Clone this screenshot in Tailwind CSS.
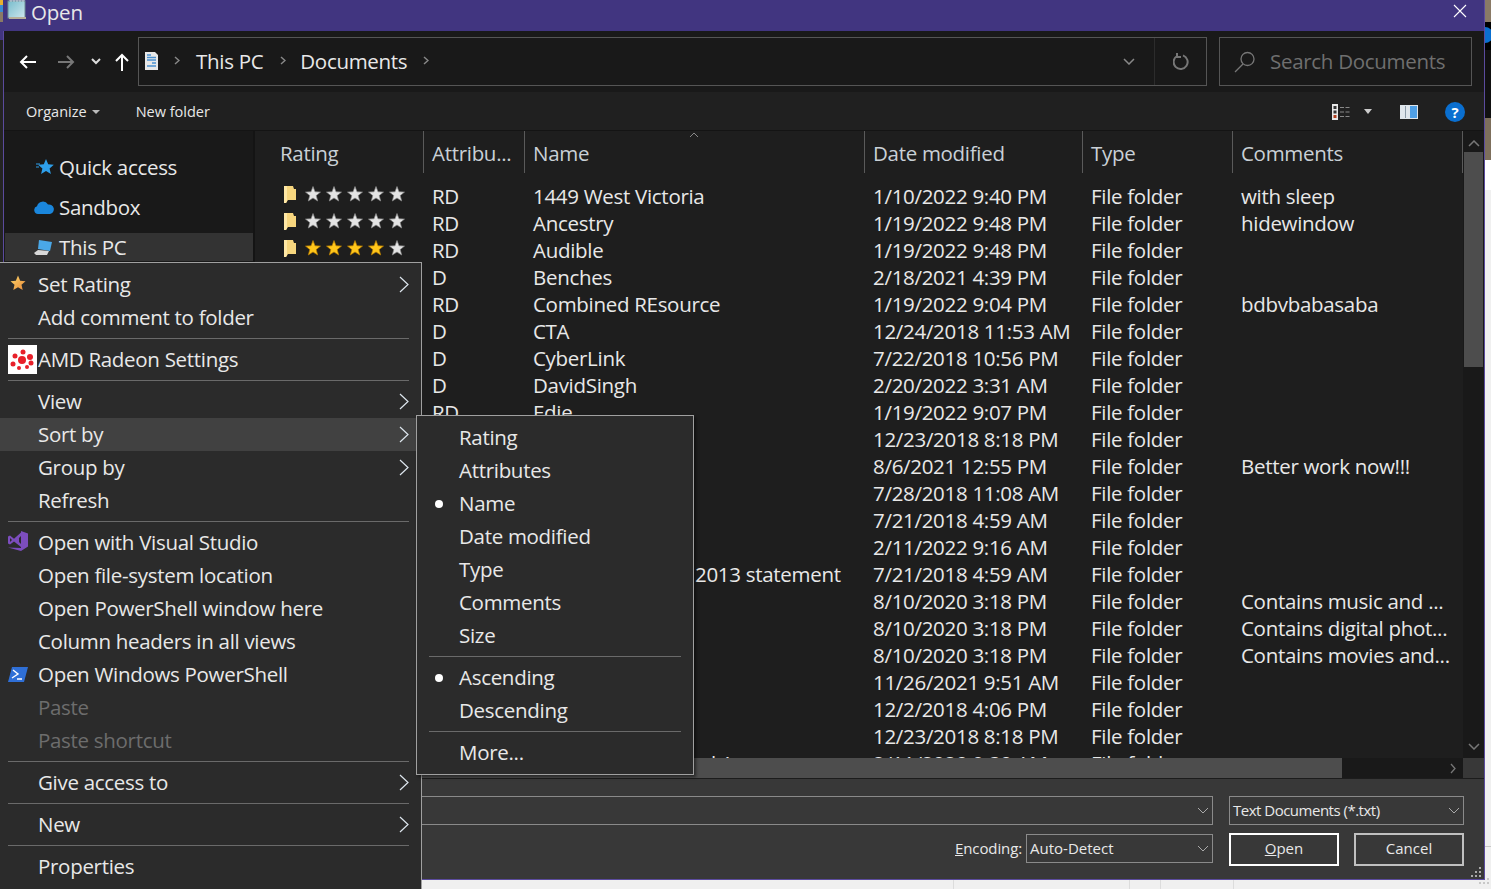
<!DOCTYPE html>
<html lang="en">
  <head>
    <meta charset="UTF-8" />
    <title>Open</title>
    <script src="https://cdn.jsdelivr.net/npm/@tailwindcss/browser@4"></script>
  </head>

  <body class="bg-[#f0f0f0] overflow-hidden">
    <div class="relative w-[1491px] h-[889px] overflow-hidden font-['Open_Sans',sans-serif] text-[#e8e8e8]">
      <div class="flex h-[880px]">
        <!-- desktop behind, left edge -->
        <div class="w-[3px] flex flex-col shrink-0">
          <div class="h-[5px] bg-[#e8b030]"></div>
          <div class="h-[7px] bg-[#3a8ad0]"></div>
          <div class="h-[10px] bg-[#8a7a66]"></div>
          <div class="h-[18px] bg-[#41357f]"></div>
          <div class="flex-1 bg-[#242424]"></div>
        </div>

        <!-- dialog -->
        <div class="w-[1482px] flex flex-col border-b border-r border-[#5b4b9e]">
          <div class="h-[31px] bg-[#413580] flex items-center justify-between shrink-0">
            <div class="flex items-center">
              <svg class="ml-[4px] -mt-[12px]" width="22" height="22" viewBox="0 0 22 22">
                <defs><linearGradient id="pad" x1="0" y1="0" x2="1" y2="1"><stop offset="0" stop-color="#78bccc" /><stop offset="1" stop-color="#cfe8ee" /></linearGradient></defs>
                <rect x="1" y="2" width="17" height="17" fill="url(#pad)" stroke="#6d8a94" />
                <path d="M2 1h16M4 0v3M7 0v3M10 0v3M13 0v3M16 0v3" stroke="#c8d4da" />
                <rect x="2" y="18" width="17" height="2" fill="#b8b09a" />
              </svg>
              <span class="ml-[2px] -mt-[6px] text-[20.5px] tracking-[-0.2px] leading-none">Open</span>
            </div>
            <svg class="mr-[17px] -mt-[9px]" width="14" height="14" viewBox="0 0 14 14" stroke="#fff" stroke-width="1.1">
              <path d="M1 1l12 12M13 1L1 13" />
            </svg>
          </div>

          <!-- nav -->
          <div class="h-[61px] bg-[#191919] flex items-center shrink-0">
            <div class="w-[135px] flex items-center shrink-0">
              <svg class="ml-[16px]" width="18" height="14" viewBox="0 0 18 14" fill="none" stroke="#fff" stroke-width="2"><path d="M17 7H2M8 1L2 7l6 6" /></svg>
              <svg class="ml-[20px]" width="18" height="14" viewBox="0 0 18 14" fill="none" stroke="#777" stroke-width="2"><path d="M1 7h15M10 1l6 6-6 6" /></svg>
              <svg class="ml-[16px]" width="10" height="7" viewBox="0 0 10 7" fill="none" stroke="#ddd" stroke-width="2"><path d="M1 1l4 4 4-4" /></svg>
              <svg class="ml-[14px]" width="14" height="18" viewBox="0 0 14 18" fill="none" stroke="#fff" stroke-width="2"><path d="M7 18V2M1 8l6-6 6 6" /></svg>
            </div>
            <div class="w-[1069px] h-[49px] border border-[#555] flex items-center text-[20.5px] tracking-[-0.3px] shrink-0">
              <svg class="ml-[5px] -mt-[1px]" width="15" height="18" viewBox="0 0 15 18">
                <path d="M1 0h10l3 3v15H1z" fill="#e8e8e8" />
                <path d="M3 3h4M3 5.500h9M3 8h9M8 11h4M3 14h9" stroke="#4a90d0" stroke-width="1.3" />
              </svg>
              <svg class="ml-[15px] -mt-[3px]" width="6" height="9" viewBox="0 0 6 9" fill="none" stroke="#888" stroke-width="1.5"><path d="M1 1l4 3.500L1 8" /></svg>
              <span class="ml-[16px]">This PC</span>
              <svg class="ml-[17px] -mt-[3px]" width="6" height="9" viewBox="0 0 6 9" fill="none" stroke="#888" stroke-width="1.5"><path d="M1 1l4 3.500L1 8" /></svg>
              <span class="ml-[14px]">Documents</span>
              <svg class="ml-[16px] -mt-[3px]" width="6" height="9" viewBox="0 0 6 9" fill="none" stroke="#888" stroke-width="1.5"><path d="M1 1l4 3.500L1 8" /></svg>
              <div class="ml-auto flex items-center h-full">
                <svg class="mr-[19px]" width="12" height="7" viewBox="0 0 12 7" fill="none" stroke="#888" stroke-width="1.5"><path d="M1 1l5 5 5-5" /></svg>
                <div class="w-[52px] h-full border-l border-[#2c2c2c] flex items-center justify-center">
                  <svg width="16" height="17" viewBox="0 0 16 17" fill="none" stroke="#777" stroke-width="2"><path d="M4 3a7 7 0 1 0 6-.6M4 0v4h4" /></svg>
                </div>
              </div>
            </div>
            <div class="ml-[12px] w-[253px] h-[49px] border border-[#555] flex items-center text-[20.5px] tracking-[-0.3px] text-[#6f6f6f] shrink-0">
              <svg class="ml-[14px]" width="22" height="22" viewBox="0 0 22 22" fill="none" stroke="#777" stroke-width="1.3"><circle cx="13.5" cy="8" r="6.5" /><path d="M9 13l-8 8" /></svg>
              <span class="ml-[14px]">Search Documents</span>
            </div>
          </div>

          <!-- toolbar -->
          <div class="h-[38px] bg-[#202020] flex items-center text-[14.5px] pt-[1px] shrink-0">
            <span class="ml-[23px]">Organize</span>
            <span class="ml-[5px] w-0 h-0 border-x-[4px] border-x-transparent border-t-[4px] border-t-[#bbb]"></span>
            <span class="ml-[36px]">New folder</span>
            <div class="ml-auto flex items-center">
              <svg width="19" height="18" viewBox="0 0 19 18">
                <rect x="0" y="1" width="6" height="16" fill="#e8e8e8" />
                <rect x="1.500" y="3" width="3" height="3" fill="#333" />
                <rect x="1.500" y="7.500" width="3" height="3" fill="#333" />
                <rect x="1.500" y="12" width="3" height="3" fill="#b04020" />
                <path d="M8 4.500h11M8 9h11M8 13.500h11" stroke="#888" stroke-dasharray="4 1.500" />
              </svg>
              <span class="ml-[13px] w-0 h-0 border-x-[4px] border-x-transparent border-t-[5px] border-t-[#ccc]"></span>
              <svg class="ml-[28px]" width="18" height="14" viewBox="0 0 18 14">
                <rect width="18" height="14" fill="#dfe6ec" />
                <rect x="10" y="1" width="7" height="12" fill="#4fa0e6" />
                <rect x="5" y="1" width="1" height="12" fill="#8a9aa8" />
              </svg>
              <span class="ml-[27px] mr-[19px] w-[20px] h-[20px] rounded-full bg-[#0a6fd0] text-white font-bold text-[15px] leading-[20px] text-center">?</span>
            </div>
          </div>

          <!-- body -->
          <div class="h-[629px] flex bg-[#1e1e1e] border-t border-[#141414] shrink-0 overflow-hidden">
            <div class="w-[250px] pt-[22px] pl-[2px] shrink-0 text-[20.5px] tracking-[-0.3px] bg-[#191919]">
              <div class="h-[28px] flex items-center">
                <svg class="ml-[31px]" width="18" height="16" viewBox="0 0 18 16"><path d="M10 0l2.200 5.200 5.600.5-4.200 3.700 1.300 5.500L10 12l-4.900 2.900 1.300-5.500L2.200 5.700l5.600-.5z" fill="#2e9fea" /><path d="M0 5h4M0 8h3" stroke="#2e9fea" /></svg>
                <span class="ml-[5px]">Quick access</span>
              </div>
              <div class="h-[28px] mt-[12px] flex items-center">
                <svg class="ml-[29px]" width="20" height="14" viewBox="0 0 20 14"><path d="M4 14a4 4 0 0 1-1-7.800A6 6 0 0 1 14 4.500 4.500 4.500 0 0 1 16 14z" fill="#1a86dc" /></svg>
                <span class="ml-[5px]">Sandbox</span>
              </div>
              <div class="h-[28px] mt-[12px] flex items-center bg-[#333333]">
                <svg class="ml-[29px]" width="19" height="17" viewBox="0 0 19 17"><path d="M5 1l13 2-2 9-12-2z" fill="#4aa8e8" /><path d="M0 14l4-3 11 1-2 4H2z" fill="#d8d8d8" /></svg>
                <span class="ml-[6px]">This PC</span>
              </div>
            </div>
            <div class="w-[2px] bg-[#141414] shrink-0"></div>

            <!-- file list -->
            <div class="w-[1208px] overflow-hidden text-[20.5px] tracking-[-0.3px] shrink-0 flex flex-col">
              <div class="relative h-[52px] shrink-0 grid grid-cols-[169px_101px_340px_218px_150px_230px] text-[#c9d0d6]">
                <div class="pl-[25px] pt-[7px] border-r border-[#5a5a5a] h-[42px]">Rating</div>
                <div class="pl-[8px] pt-[7px] border-r border-[#5a5a5a] h-[42px]">Attribu...</div>
                <div class="pl-[8px] pt-[7px] border-r border-[#5a5a5a] h-[42px]">Name</div>
                <div class="pl-[8px] pt-[7px] border-r border-[#5a5a5a] h-[42px]">Date modified</div>
                <div class="pl-[8px] pt-[7px] border-r border-[#5a5a5a] h-[42px]">Type</div>
                <div class="pl-[8px] pt-[7px] border-r border-[#5a5a5a] h-[42px]">Comments</div>
                <svg class="absolute left-[434px] top-[1px]" width="10" height="6" viewBox="0 0 10 6" fill="none" stroke="#888"><path d="M1 5l4-4 4 4" /></svg>
              </div>
              <div id="rows" class="h-[576px] overflow-hidden"></div>
            </div>

            <!-- vertical scrollbar -->
            <div class="w-[21px] bg-[#191919] shrink-0 h-[628px] flex flex-col items-center">
              <svg class="mt-[9px]" width="12" height="7" viewBox="0 0 12 7" fill="none" stroke="#777" stroke-width="1.5"><path d="M1 6l5-5 5 5" /></svg>
              <div class="mt-[5px] w-[19px] h-[215px] bg-[#4d4d4d]"></div>
              <svg class="mt-[376px]" width="12" height="7" viewBox="0 0 12 7" fill="none" stroke="#777" stroke-width="1.5"><path d="M1 1l5 5 5-5" /></svg>
            </div>
          </div>

          <!-- horizontal scrollbar -->
          <div class="h-[21px] flex shrink-0 -mt-[1px] border-b border-[#1c1c1c]">
            <div class="w-[1339px] bg-[#4d4d4d]"></div>
            <div class="w-[121px] bg-[#191919] flex items-center justify-end pr-[7px]">
              <svg width="6" height="11" viewBox="0 0 6 11" fill="none" stroke="#777" stroke-width="1.3"><path d="M1 1l4 4.500L1 10" /></svg>
            </div>
            <div class="flex-1 bg-[#383838]"></div>
          </div>

          <!-- bottom -->
          <div class="relative flex-1 bg-[#383838] text-[15px]">
            <div class="absolute left-[400px] top-[17px] w-[810px] h-[29px] border border-[#8a8a8a] flex items-center justify-end pr-[4px]">
              <svg width="10" height="6" viewBox="0 0 10 6" fill="none" stroke="#aaa"><path d="M0 0l5 5 5-5" /></svg>
            </div>
            <div class="absolute left-[1226px] top-[17px] w-[235px] h-[29px] border border-[#8a8a8a] flex items-center justify-between px-[3px] pr-[4px]">
              <span class="tracking-[-0.5px]">Text Documents (*.txt)</span>
              <svg width="10" height="6" viewBox="0 0 10 6" fill="none" stroke="#aaa"><path d="M0 0l5 5 5-5" /></svg>
            </div>
            <span class="absolute left-[952px] top-[58px] tracking-[-0.1px]"><u>E</u>ncoding:</span>
            <div class="absolute left-[1023px] top-[55px] w-[187px] h-[29px] border border-[#8a8a8a] flex items-center justify-between px-[3px] pr-[4px]">
              <span>Auto-Detect</span>
              <svg width="10" height="6" viewBox="0 0 10 6" fill="none" stroke="#aaa"><path d="M0 0l5 5 5-5" /></svg>
            </div>
            <div class="absolute left-[1226px] top-[54px] w-[110px] h-[33px] border-2 border-white flex items-center justify-center pb-[2px]"><span><u>O</u>pen</span></div>
            <div class="absolute left-[1351px] top-[54px] w-[110px] h-[33px] border-2 border-[#c0c0c0] flex items-center justify-center pb-[2px]">Cancel</div>
            <svg class="absolute right-[2px] bottom-[1px]" width="11" height="11" viewBox="0 0 11 11" fill="#a8a8a8">
              <rect x="8" y="0" width="2" height="2" /><rect x="4" y="4" width="2" height="2" /><rect x="8" y="4" width="2" height="2" /><rect x="0" y="8" width="2" height="2" /><rect x="4" y="8" width="2" height="2" /><rect x="8" y="8" width="2" height="2" />
            </svg>
          </div>
        </div>

        <!-- desktop behind, right edge -->
        <div class="w-[6px] flex flex-col shrink-0">
          <div class="h-[22px] bg-[#8a7a66]"></div>
          <div class="h-[28px] bg-black relative overflow-hidden"><div class="absolute -left-[8px] top-[5px] w-[16px] h-[16px] rounded-full bg-[#0a6fd0]"></div></div>
          <div class="h-[68px] bg-[#111111]"></div>
          <div class="h-[42px] bg-[#7d6f5c]"></div>
          <div class="h-[30px] bg-white"></div>
          <div class="h-[656px] bg-[#f0f0f0]"></div>
          <div class="h-px bg-[#c8c8c8]"></div>
          <div class="flex-1 bg-[#f0f0f0]"></div>
        </div>
      </div>
      <div class="h-[9px] bg-[#f0f0f0] flex">
        <div class="ml-[953px] w-px h-full bg-[#dcdcdc]"></div>
        <div class="ml-[175px] w-px h-full bg-[#dcdcdc]"></div>
        <div class="ml-[30px] w-px h-full bg-[#dcdcdc]"></div>
        <div class="ml-[72px] w-px h-full bg-[#dcdcdc]"></div>
      </div>

      <!-- dialog's left border and the resize grip's shadow, over the edges -->
      <div class="absolute left-[3px] top-[31px] w-px h-[849px] bg-[#5b4b9e]"></div>
      <svg class="absolute left-[1479px] top-[878px]" width="12" height="11" viewBox="0 0 12 11" fill="#c8c8c8">
        <rect x="8" y="0" width="2" height="2" /><rect x="8" y="4" width="2" height="2" /><rect x="0" y="4" width="2" height="2" /><rect x="4" y="4" width="2" height="2" />
      </svg>

      <!-- context menu -->
      <div class="absolute left-0 top-[262px] w-[422px] h-[627px] bg-[#2b2b2b] border-t border-r border-[#a0a0a0] pt-[5px] text-[20.5px] tracking-[-0.3px]">
        <div class="h-[33px] flex items-center relative pl-[38px]">
          <svg class="absolute left-[10px] top-[7px]" width="16" height="17" viewBox="0 0 17 17">
            <defs><linearGradient id="rate" x1="0" y1="0" x2="1" y2="1"><stop offset="0" stop-color="#fbd66a" /><stop offset="1" stop-color="#e88a3a" /></linearGradient></defs>
            <path d="M8.500 0l2.300 5.500 5.700.5-4.300 3.800 1.300 5.700-5-3-5 3 1.300-5.700L.5 6l5.700-.5z" fill="url(#rate)" />
          </svg>
          <span>Set Rating</span>
          <svg class="absolute right-[12px] top-[8px]" width="10" height="17" viewBox="0 0 10 17" fill="none" stroke="#dde6ee" stroke-width="1.2"><path d="M1 1l8 7.500L1 16" /></svg>
        </div>
        <div class="h-[33px] flex items-center pl-[38px]">Add comment to folder</div>
        <div class="h-px bg-[#6a6a6a] ml-[8px] mr-[12px] my-[4px]"></div>
        <div class="h-[33px] flex items-center relative pl-[38px]">
          <svg class="absolute left-[8px] top-[2px]" width="29" height="29" viewBox="0 0 29 29">
            <rect width="29" height="29" fill="#fff" />
            <g fill="#e8202a"><circle cx="14" cy="15" r="4" /><circle cx="7" cy="11" r="2.500" /><circle cx="22" cy="12" r="3" /><circle cx="5" cy="19" r="2.500" /><circle cx="23" cy="18" r="2.500" /><circle cx="15" cy="7" r="2.500" /><circle cx="11" cy="23" r="2" /><circle cx="19" cy="22" r="2" /></g>
          </svg>
          <span>AMD Radeon Settings</span>
        </div>
        <div class="h-px bg-[#6a6a6a] ml-[8px] mr-[12px] my-[4px]"></div>
        <div class="h-[33px] flex items-center relative pl-[38px]">
          <span>View</span>
          <svg class="absolute right-[12px] top-[8px]" width="10" height="17" viewBox="0 0 10 17" fill="none" stroke="#dde6ee" stroke-width="1.2"><path d="M1 1l8 7.500L1 16" /></svg>
        </div>
        <div class="h-[33px] flex items-center relative pl-[38px] bg-[#414141]">
          <span>Sort by</span>
          <svg class="absolute right-[12px] top-[8px]" width="10" height="17" viewBox="0 0 10 17" fill="none" stroke="#dde6ee" stroke-width="1.2"><path d="M1 1l8 7.500L1 16" /></svg>
        </div>
        <div class="h-[33px] flex items-center relative pl-[38px]">
          <span>Group by</span>
          <svg class="absolute right-[12px] top-[8px]" width="10" height="17" viewBox="0 0 10 17" fill="none" stroke="#dde6ee" stroke-width="1.2"><path d="M1 1l8 7.500L1 16" /></svg>
        </div>
        <div class="h-[33px] flex items-center pl-[38px]">Refresh</div>
        <div class="h-px bg-[#6a6a6a] ml-[8px] mr-[12px] my-[4px]"></div>
        <div class="h-[33px] flex items-center relative pl-[38px]">
          <svg class="absolute left-[8px] top-[5px]" width="20" height="20" viewBox="0 0 20 20"><path d="M13 0l7 2.500v13L13 20 0 16.500l13 .5z" fill="#7c4dbd" /><path d="M0 5.500L2 4.500l4 3.200L13 1.500v3.500L9 9l4 4v3L6 10.500 2 13.500l-2-1zM2 7v4l2-2zM9 9l2 2V7z" fill="#7c4dbd" fill-rule="evenodd" /></svg>
          <span>Open with Visual Studio</span>
        </div>
        <div class="h-[33px] flex items-center pl-[38px]">Open file-system location</div>
        <div class="h-[33px] flex items-center pl-[38px]">Open PowerShell window here</div>
        <div class="h-[33px] flex items-center pl-[38px]">Column headers in all views</div>
        <div class="h-[33px] flex items-center relative pl-[38px]">
          <svg class="absolute left-[8px] top-[9px]" width="20" height="15" viewBox="0 0 20 15"><path d="M4 0h16l-4 15H0z" fill="#2f6fd6" /><path d="M5 3l5 4-6 4M9 12h5" fill="none" stroke="#fff" stroke-width="1.4" /></svg>
          <span>Open Windows PowerShell</span>
        </div>
        <div class="h-[33px] flex items-center pl-[38px] text-[#6d6d6d]">Paste</div>
        <div class="h-[33px] flex items-center pl-[38px] text-[#6d6d6d]">Paste shortcut</div>
        <div class="h-px bg-[#6a6a6a] ml-[8px] mr-[12px] my-[4px]"></div>
        <div class="h-[33px] flex items-center relative pl-[38px]">
          <span>Give access to</span>
          <svg class="absolute right-[12px] top-[8px]" width="10" height="17" viewBox="0 0 10 17" fill="none" stroke="#dde6ee" stroke-width="1.2"><path d="M1 1l8 7.500L1 16" /></svg>
        </div>
        <div class="h-px bg-[#6a6a6a] ml-[8px] mr-[12px] my-[4px]"></div>
        <div class="h-[33px] flex items-center relative pl-[38px]">
          <span>New</span>
          <svg class="absolute right-[12px] top-[8px]" width="10" height="17" viewBox="0 0 10 17" fill="none" stroke="#dde6ee" stroke-width="1.2"><path d="M1 1l8 7.500L1 16" /></svg>
        </div>
        <div class="h-px bg-[#6a6a6a] ml-[8px] mr-[12px] my-[4px]"></div>
        <div class="h-[33px] flex items-center pl-[38px]">Properties</div>
      </div>

      <!-- sort by submenu -->
      <div class="absolute left-[416px] top-[415px] w-[278px] h-[360px] bg-[#2b2b2b] border border-[#a0a0a0] pt-[5px] text-[20.5px] tracking-[-0.3px] shadow-[2px_2px_3px_rgba(0,0,0,0.5)]">
        <div class="h-[33px] flex items-center pl-[42px]">Rating</div>
        <div class="h-[33px] flex items-center pl-[42px]">Attributes</div>
        <div class="h-[33px] flex items-center pl-[18px]"><span class="w-[8px] h-[8px] rounded-full bg-white mr-[16px]"></span>Name</div>
        <div class="h-[33px] flex items-center pl-[42px]">Date modified</div>
        <div class="h-[33px] flex items-center pl-[42px]">Type</div>
        <div class="h-[33px] flex items-center pl-[42px]">Comments</div>
        <div class="h-[33px] flex items-center pl-[42px]">Size</div>
        <div class="h-px bg-[#6a6a6a] mx-[12px] my-[4px]"></div>
        <div class="h-[33px] flex items-center pl-[18px]"><span class="w-[8px] h-[8px] rounded-full bg-white mr-[16px]"></span>Ascending</div>
        <div class="h-[33px] flex items-center pl-[42px]">Descending</div>
        <div class="h-px bg-[#6a6a6a] mx-[12px] my-[4px]"></div>
        <div class="h-[33px] flex items-center pl-[42px]">More...</div>
      </div>
    </div>

    <script>
      const files = [
        ["RD", "1449 West Victoria", "1/10/2022 9:40 PM", "with sleep", 0],
        ["RD", "Ancestry", "1/19/2022 9:48 PM", "hidewindow", 0],
        ["RD", "Audible", "1/19/2022 9:48 PM", "", 4],
        ["D", "Benches", "2/18/2021 4:39 PM", ""],
        ["RD", "Combined REsource", "1/19/2022 9:04 PM", "bdbvbabasaba"],
        ["D", "CTA", "12/24/2018 11:53 AM", ""],
        ["D", "CyberLink", "7/22/2018 10:56 PM", ""],
        ["D", "DavidSingh", "2/20/2022 3:31 AM", ""],
        ["RD", "Edie", "1/19/2022 9:07 PM", ""],
        ["", "", "12/23/2018 8:18 PM", ""],
        ["", "", "8/6/2021 12:55 PM", "Better work now!!!"],
        ["", "", "7/28/2018 11:08 AM", ""],
        ["", "", "7/21/2018 4:59 AM", ""],
        ["", "", "2/11/2022 9:16 AM", ""],
        ["", "2013 statement", "7/21/2018 4:59 AM", "", null, "pl-[170px]"],
        ["", "", "8/10/2020 3:18 PM", "Contains music and ..."],
        ["", "", "8/10/2020 3:18 PM", "Contains digital phot..."],
        ["", "", "8/10/2020 3:18 PM", "Contains movies and..."],
        ["", "", "11/26/2021 9:51 AM", ""],
        ["", "", "12/2/2018 4:06 PM", ""],
        ["", "", "12/23/2018 8:18 PM", ""],
        ["", "l A", "2/11/2020 9:30 AM", "", null, "pl-[186px]"],
      ];
      const star = (c, edge) => `<svg width="16" height="16" viewBox="-0.5 -0.5 16 16"><path d="M7.500 0l2 5.300 5.500.3-4.300 3.500 1.500 5.400-4.700-3-4.700 3 1.500-5.400L0 5.600l5.500-.3z" fill="${c}" stroke="${edge}" stroke-width="0.7"/></svg>`;
      const rating = (n) => {
        if (n === undefined || n === null) return "";
        let stars = "";
        for (let i = 0; i < 5; i++) stars += i < n ? star("#ffc61a", "#b57a00") : star("#e4e4e4", "#8a8a8a");
        return `<div class="flex items-center h-full pb-[5px] pl-[29px]"><svg width="12" height="17" viewBox="0 0 12 17"><path d="M0 0h9l1 3h2v11H4l-2 3H0z" fill="#f7d67e"/><path d="M0 0h3v15l-1 2H0z" fill="#ffe8a6"/></svg><div class="flex gap-[5px] ml-[9px]">${stars}</div></div>`;
      };
      document.getElementById("rows").innerHTML = files.map((f) => `
        <div class="grid grid-cols-[169px_101px_340px_218px_150px_230px] h-[27px] leading-[27px] whitespace-nowrap">
          <div>${rating(f[4])}</div>
          <div class="pl-[8px]">${f[0]}</div>
          <div class="${f[5] || "pl-[8px]"}">${f[1]}</div>
          <div class="pl-[8px]">${f[2]}</div>
          <div class="pl-[8px]">File folder</div>
          <div class="pl-[8px]">${f[3]}</div>
        </div>`).join("");
    </script>
  </body>
</html>
